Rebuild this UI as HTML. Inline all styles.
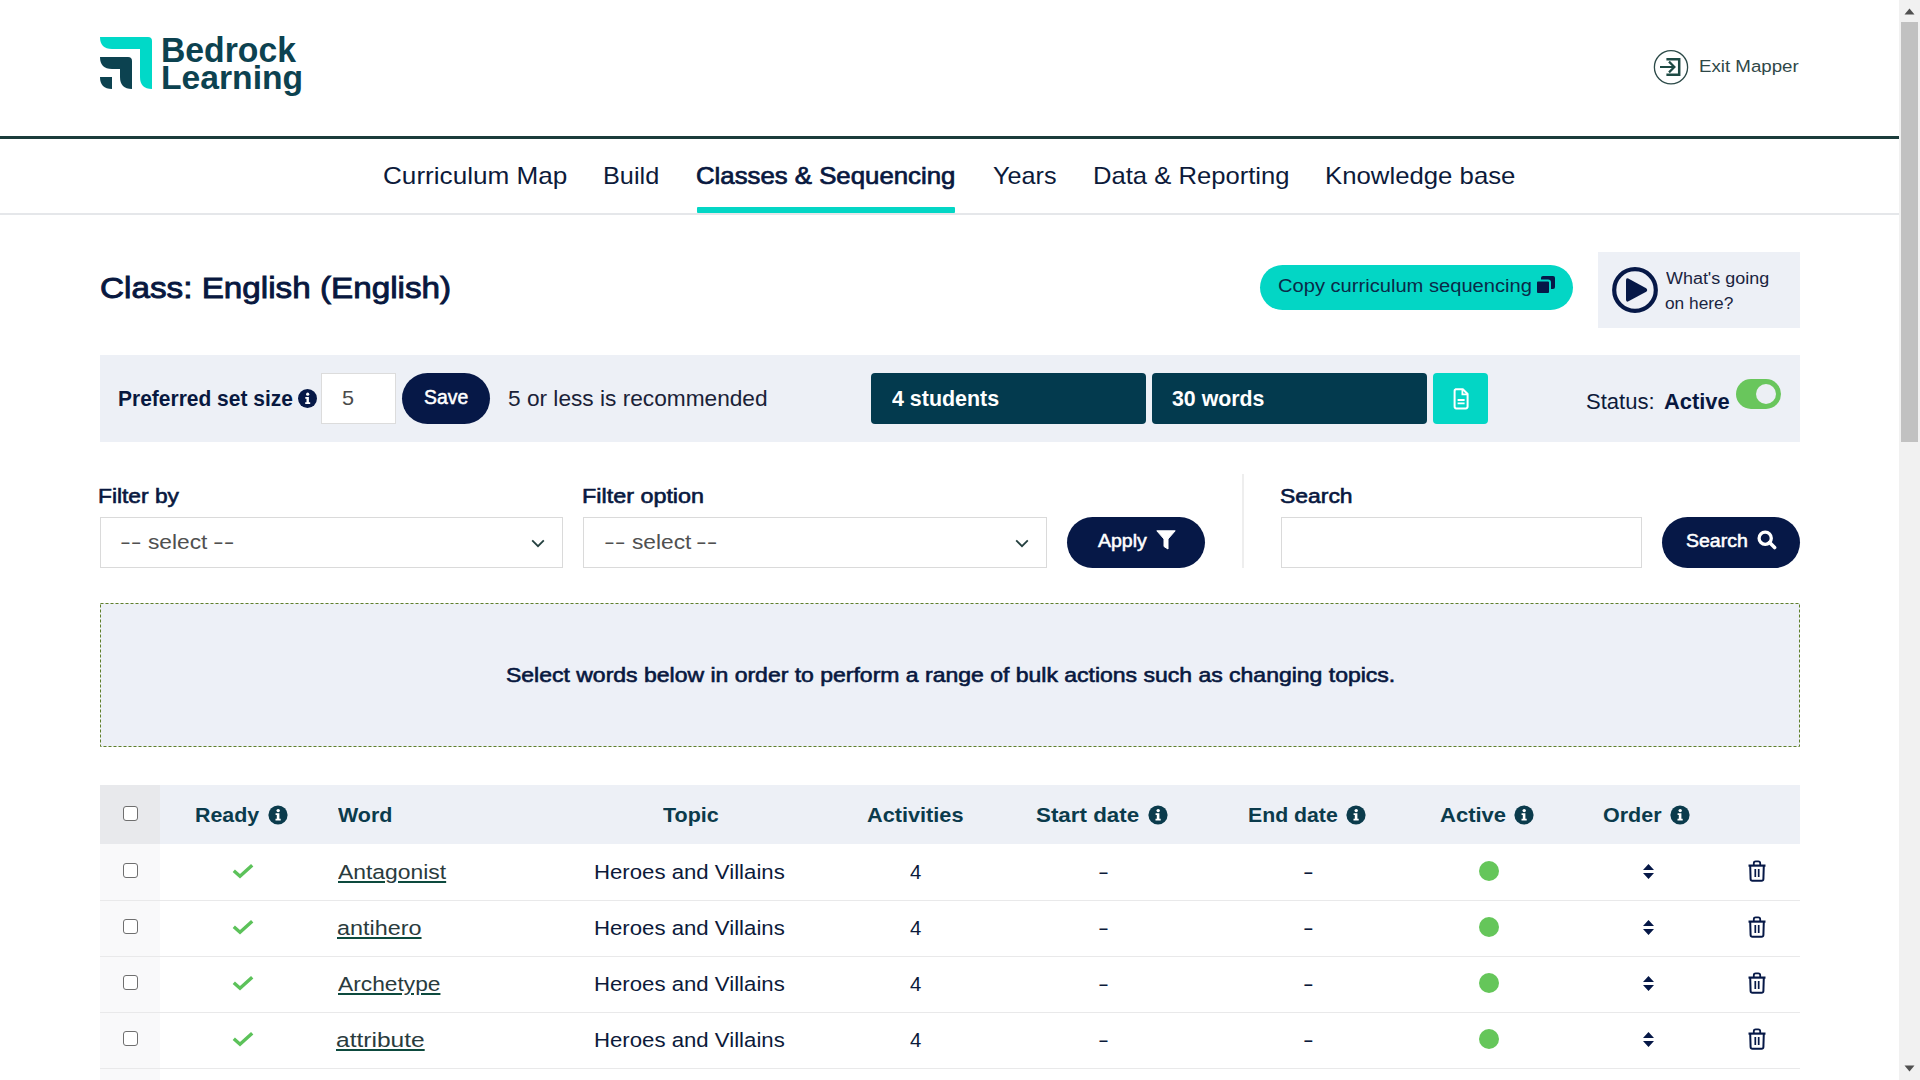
<!DOCTYPE html>
<html><head><meta charset="utf-8"><title>Bedrock Learning</title>
<style>
html,body{margin:0;padding:0;background:#fff;width:1920px;height:1080px;overflow:hidden;position:relative}
.b{position:absolute;display:block}
.t{position:absolute;white-space:pre;font-family:"Liberation Sans",sans-serif;transform-origin:0 0}
</style></head><body>
<div class=b style="left:1899px;top:0px;width:21px;height:1080px;background:#f1f1f1"></div>
<div class=b style="left:1901px;top:22px;width:17px;height:420px;background:#c1c1c1"></div>
<svg class=b style="left:1904px;top:8px" width="11" height="7" viewBox="0 0 11 7"><path d="M0.5 6.5 L5.5 0.5 L10.5 6.5 Z" fill="#505050"/></svg>
<svg class=b style="left:1904px;top:1065px" width="11" height="7" viewBox="0 0 11 7"><path d="M0.5 0.5 L5.5 6.5 L10.5 0.5 Z" fill="#505050"/></svg>
<svg class=b style="left:100px;top:37px" width="52" height="52" viewBox="0 0 52 52">
<path d="M0 0 H48 Q52 0 52 4 V52 Q40 52 40 40 V12 H12 Q0 12 0 0 Z" fill="#00d9c8"/>
<path d="M0 20 H28 Q32 20 32 24 V52 Q20 52 20 40 V32 H12 Q0 32 0 20 Z" fill="#0c4250"/>
<path d="M0 40 H12 V52 Q0 52 0 40 Z" fill="#0c4250"/>
</svg>
<svg class=b style="left:1653px;top:49px" width="36" height="36" viewBox="0 0 36 36">
<circle cx="18" cy="18.2" r="16.6" fill="none" stroke="#2c4a48" stroke-width="1.3"/>
<path d="M13.4 10.3 H26.2 V25.7 H13.4" fill="none" stroke="#1e4a44" stroke-width="2.5"/>
<path d="M7 18 H20.5" stroke="#1e4a44" stroke-width="2"/>
<path d="M16 12.6 L21.4 18 L16 23.4" fill="none" stroke="#1e4a44" stroke-width="2.2"/>
</svg>
<div class=b style="left:0px;top:136px;width:1899px;height:3px;background:#1b3c3b"></div>
<div class=b style="left:0px;top:213px;width:1899px;height:2px;background:#e5e7ea"></div>
<div class=b style="left:697px;top:207px;width:258px;height:6px;background:#03d6c5;border-radius:1px"></div>
<div class=b style="left:1260px;top:265px;width:313px;height:45px;background:#03d6c5;border-radius:23px"></div>
<svg class=b style="left:1536px;top:276px" width="19" height="18" viewBox="0 0 19 18">
<rect x="5" y="0" width="14" height="13" rx="2" fill="#061847"/>
<rect x="0" y="4.5" width="14" height="13.5" rx="2" fill="#061847" stroke="#03d6c5" stroke-width="2"/>
</svg>
<div class=b style="left:1598px;top:252px;width:202px;height:76px;background:#edf0f6"></div>
<svg class=b style="left:1611px;top:266px" width="48" height="48" viewBox="0 0 48 48">
<circle cx="24" cy="24" r="20.8" fill="none" stroke="#061847" stroke-width="4.2"/>
<path d="M17.3 12.6 Q15 11.4 15 14.4 V33.6 Q15 36.6 17.5 35.3 L35.2 25.8 Q37.2 24 35.2 22.2 Z" fill="#061847"/>
</svg>
<div class=b style="left:100px;top:355px;width:1700px;height:87px;background:#edf0f6"></div>
<svg class=b style="left:298px;top:389px" width="19" height="19" viewBox="0 0 19 19"><circle cx="9.5" cy="9.5" r="9.5" fill="#061847"/><circle cx="9.7" cy="5.2" r="1.6" fill="#fff"/><path d="M7.3 8 H10.9 V13.2 H12.2 V15 H7.2 V13.2 H8.5 V9.8 H7.3 Z" fill="#fff"/></svg>
<div class=b style="left:321px;top:373px;width:75px;height:51px;background:#fff;border:1px solid #dcdcdc;box-sizing:border-box"></div>
<div class=b style="left:402px;top:373px;width:88px;height:51px;background:#061847;border-radius:26px"></div>
<div class=b style="left:871px;top:373px;width:275px;height:51px;background:#033a4e;border-radius:4px"></div>
<div class=b style="left:1152px;top:373px;width:275px;height:51px;background:#033a4e;border-radius:4px"></div>
<div class=b style="left:1433px;top:373px;width:55px;height:51px;background:#03d6c5;border-radius:4px"></div>
<svg class=b style="left:1452px;top:387px" width="18" height="23" viewBox="0 0 18 23"><path d="M3.6 2.2 H10.8 L15.6 7 V19.6 Q15.6 21.4 13.8 21.4 H4.2 Q2.6 21.4 2.6 19.6 V4 Q2.6 2.2 4.2 2.2 Z" fill="none" stroke="#fff" stroke-width="2" stroke-linejoin="round"/><path d="M10.4 2.4 V7.4 H15.4" fill="none" stroke="#fff" stroke-width="1.8"/><path d="M5.6 13 H12.6 M5.6 16.4 H12.6" stroke="#fff" stroke-width="1.9"/></svg>
<div class=b style="left:1736px;top:379px;width:45px;height:30px;background:#69c65c;border-radius:15px"></div>
<div class=b style="left:1755.5px;top:383.5px;width:20.5px;height:20.5px;background:#eceff4;border-radius:50%"></div>
<div class=b style="left:100px;top:517px;width:463px;height:51px;background:#fff;border:1px solid #dadada;box-sizing:border-box"></div>
<div class=b style="left:583px;top:517px;width:464px;height:51px;background:#fff;border:1px solid #dadada;box-sizing:border-box"></div>
<svg class=b style="left:531px;top:539px" width="14" height="9" viewBox="0 0 14 9"><path d="M1.2 1.4 L7 7.2 L12.8 1.4" fill="none" stroke="#24403f" stroke-width="1.8"/></svg>
<svg class=b style="left:1015px;top:539px" width="14" height="9" viewBox="0 0 14 9"><path d="M1.2 1.4 L7 7.2 L12.8 1.4" fill="none" stroke="#24403f" stroke-width="1.8"/></svg>
<div class=b style="left:1067px;top:517px;width:138px;height:51px;background:#061847;border-radius:26px"></div>
<svg class=b style="left:1156px;top:530px" width="20" height="20" viewBox="0 0 20 20"><path d="M0.8 0.8 H19.2 L12 9 V19 L8 16.5 V9 Z" fill="#fff" stroke="#fff" stroke-width="1" stroke-linejoin="round"/></svg>
<div class=b style="left:1242px;top:474px;width:2px;height:94px;background:#eeeeee"></div>
<div class=b style="left:1281px;top:517px;width:361px;height:51px;background:#fff;border:1px solid #dadada;box-sizing:border-box"></div>
<div class=b style="left:1662px;top:517px;width:138px;height:51px;background:#061847;border-radius:26px"></div>
<svg class=b style="left:1757px;top:530px" width="20" height="20" viewBox="0 0 20 20"><circle cx="8.2" cy="8.2" r="6.1" fill="none" stroke="#fff" stroke-width="3.3"/><path d="M12.6 12.6 L17.6 17.6" stroke="#fff" stroke-width="3.6" stroke-linecap="round"/></svg>
<div class=b style="left:100px;top:603px;width:1700px;height:144px;background:#edf0f7"></div>
<svg class=b style="left:100px;top:603px" width="1700" height="144" viewBox="0 0 1700 144"><rect x="0.5" y="0.5" width="1699" height="143" fill="none" stroke="#5f7f2a" stroke-width="1" stroke-dasharray="3 2"/></svg>
<div class=b style="left:100px;top:785px;width:1700px;height:59px;background:#edf0f6"></div>
<div class=b style="left:100px;top:785px;width:60px;height:59px;background:#e8e9ec"></div>
<div class=b style="left:123px;top:806px;width:15px;height:15px;background:#fff;border:1.3px solid #6f6f6f;border-radius:3px;box-sizing:border-box"></div>
<svg class=b style="left:267.8px;top:804.5px" width="20" height="20" viewBox="0 0 20 20"><circle cx="10" cy="10" r="9.6" fill="#0b3b4c"/><circle cx="10.2" cy="5.6" r="1.7" fill="#fff"/><path d="M7.6 8.3 H11.4 V13.8 H12.7 V15.6 H7.5 V13.8 H8.8 V10.1 H7.6 Z" fill="#fff"/></svg>
<svg class=b style="left:1147.5px;top:804.5px" width="20" height="20" viewBox="0 0 20 20"><circle cx="10" cy="10" r="9.6" fill="#0b3b4c"/><circle cx="10.2" cy="5.6" r="1.7" fill="#fff"/><path d="M7.6 8.3 H11.4 V13.8 H12.7 V15.6 H7.5 V13.8 H8.8 V10.1 H7.6 Z" fill="#fff"/></svg>
<svg class=b style="left:1346px;top:804.5px" width="20" height="20" viewBox="0 0 20 20"><circle cx="10" cy="10" r="9.6" fill="#0b3b4c"/><circle cx="10.2" cy="5.6" r="1.7" fill="#fff"/><path d="M7.6 8.3 H11.4 V13.8 H12.7 V15.6 H7.5 V13.8 H8.8 V10.1 H7.6 Z" fill="#fff"/></svg>
<svg class=b style="left:1514px;top:804.5px" width="20" height="20" viewBox="0 0 20 20"><circle cx="10" cy="10" r="9.6" fill="#0b3b4c"/><circle cx="10.2" cy="5.6" r="1.7" fill="#fff"/><path d="M7.6 8.3 H11.4 V13.8 H12.7 V15.6 H7.5 V13.8 H8.8 V10.1 H7.6 Z" fill="#fff"/></svg>
<svg class=b style="left:1670px;top:804.5px" width="20" height="20" viewBox="0 0 20 20"><circle cx="10" cy="10" r="9.6" fill="#0b3b4c"/><circle cx="10.2" cy="5.6" r="1.7" fill="#fff"/><path d="M7.6 8.3 H11.4 V13.8 H12.7 V15.6 H7.5 V13.8 H8.8 V10.1 H7.6 Z" fill="#fff"/></svg>
<div class=b style="left:100px;top:844px;width:60px;height:56px;background:#f9f9fa"></div>
<div class=b style="left:100px;top:900px;width:60px;height:56px;background:#f9f9fa"></div>
<div class=b style="left:100px;top:956px;width:60px;height:56px;background:#f9f9fa"></div>
<div class=b style="left:100px;top:1012px;width:60px;height:56px;background:#f9f9fa"></div>
<div class=b style="left:100px;top:1068px;width:60px;height:56px;background:#f9f9fa"></div>
<div class=b style="left:100px;top:900px;width:1700px;height:1px;background:#e9e9ea"></div>
<div class=b style="left:123px;top:863px;width:15px;height:15px;background:#fff;border:1.3px solid #6f6f6f;border-radius:3px;box-sizing:border-box"></div>
<svg class=b style="left:231px;top:863px" width="24" height="17" viewBox="0 0 24 17"><path d="M2.8 7.8 L9 13.3 L21.2 2.2" fill="none" stroke="#5cc25a" stroke-width="3.4"/></svg>
<div class=b style="left:1479px;top:861px;width:20px;height:20px;background:#65c65a;border-radius:50%"></div>
<svg class=b style="left:1642px;top:864px" width="13" height="15" viewBox="0 0 13 15"><path d="M1 6 L6.5 0 L12 6 Z M1 9 L6.5 15 L12 9 Z" fill="#061847"/></svg>
<svg class=b style="left:1747px;top:860px" width="20" height="22" viewBox="0 0 20 22"><path d="M1.5 5.6 H18.5" stroke="#061847" stroke-width="2.2"/><path d="M6.8 5 V3.2 Q6.8 1.3 8.8 1.3 H11.2 Q13.2 1.3 13.2 3.2 V5" fill="none" stroke="#061847" stroke-width="1.8"/><path d="M3.2 5.6 L3.6 19 Q3.7 20.8 5.5 20.8 H14.5 Q16.3 20.8 16.4 19 L16.8 5.6" fill="none" stroke="#061847" stroke-width="2"/><path d="M8.3 9 V17 M11.7 9 V17" stroke="#061847" stroke-width="1.7"/></svg>
<div class=b style="left:100px;top:956px;width:1700px;height:1px;background:#e9e9ea"></div>
<div class=b style="left:123px;top:919px;width:15px;height:15px;background:#fff;border:1.3px solid #6f6f6f;border-radius:3px;box-sizing:border-box"></div>
<svg class=b style="left:231px;top:919px" width="24" height="17" viewBox="0 0 24 17"><path d="M2.8 7.8 L9 13.3 L21.2 2.2" fill="none" stroke="#5cc25a" stroke-width="3.4"/></svg>
<div class=b style="left:1479px;top:917px;width:20px;height:20px;background:#65c65a;border-radius:50%"></div>
<svg class=b style="left:1642px;top:920px" width="13" height="15" viewBox="0 0 13 15"><path d="M1 6 L6.5 0 L12 6 Z M1 9 L6.5 15 L12 9 Z" fill="#061847"/></svg>
<svg class=b style="left:1747px;top:916px" width="20" height="22" viewBox="0 0 20 22"><path d="M1.5 5.6 H18.5" stroke="#061847" stroke-width="2.2"/><path d="M6.8 5 V3.2 Q6.8 1.3 8.8 1.3 H11.2 Q13.2 1.3 13.2 3.2 V5" fill="none" stroke="#061847" stroke-width="1.8"/><path d="M3.2 5.6 L3.6 19 Q3.7 20.8 5.5 20.8 H14.5 Q16.3 20.8 16.4 19 L16.8 5.6" fill="none" stroke="#061847" stroke-width="2"/><path d="M8.3 9 V17 M11.7 9 V17" stroke="#061847" stroke-width="1.7"/></svg>
<div class=b style="left:100px;top:1012px;width:1700px;height:1px;background:#e9e9ea"></div>
<div class=b style="left:123px;top:975px;width:15px;height:15px;background:#fff;border:1.3px solid #6f6f6f;border-radius:3px;box-sizing:border-box"></div>
<svg class=b style="left:231px;top:975px" width="24" height="17" viewBox="0 0 24 17"><path d="M2.8 7.8 L9 13.3 L21.2 2.2" fill="none" stroke="#5cc25a" stroke-width="3.4"/></svg>
<div class=b style="left:1479px;top:973px;width:20px;height:20px;background:#65c65a;border-radius:50%"></div>
<svg class=b style="left:1642px;top:976px" width="13" height="15" viewBox="0 0 13 15"><path d="M1 6 L6.5 0 L12 6 Z M1 9 L6.5 15 L12 9 Z" fill="#061847"/></svg>
<svg class=b style="left:1747px;top:972px" width="20" height="22" viewBox="0 0 20 22"><path d="M1.5 5.6 H18.5" stroke="#061847" stroke-width="2.2"/><path d="M6.8 5 V3.2 Q6.8 1.3 8.8 1.3 H11.2 Q13.2 1.3 13.2 3.2 V5" fill="none" stroke="#061847" stroke-width="1.8"/><path d="M3.2 5.6 L3.6 19 Q3.7 20.8 5.5 20.8 H14.5 Q16.3 20.8 16.4 19 L16.8 5.6" fill="none" stroke="#061847" stroke-width="2"/><path d="M8.3 9 V17 M11.7 9 V17" stroke="#061847" stroke-width="1.7"/></svg>
<div class=b style="left:100px;top:1068px;width:1700px;height:1px;background:#e9e9ea"></div>
<div class=b style="left:123px;top:1031px;width:15px;height:15px;background:#fff;border:1.3px solid #6f6f6f;border-radius:3px;box-sizing:border-box"></div>
<svg class=b style="left:231px;top:1031px" width="24" height="17" viewBox="0 0 24 17"><path d="M2.8 7.8 L9 13.3 L21.2 2.2" fill="none" stroke="#5cc25a" stroke-width="3.4"/></svg>
<div class=b style="left:1479px;top:1029px;width:20px;height:20px;background:#65c65a;border-radius:50%"></div>
<svg class=b style="left:1642px;top:1032px" width="13" height="15" viewBox="0 0 13 15"><path d="M1 6 L6.5 0 L12 6 Z M1 9 L6.5 15 L12 9 Z" fill="#061847"/></svg>
<svg class=b style="left:1747px;top:1028px" width="20" height="22" viewBox="0 0 20 22"><path d="M1.5 5.6 H18.5" stroke="#061847" stroke-width="2.2"/><path d="M6.8 5 V3.2 Q6.8 1.3 8.8 1.3 H11.2 Q13.2 1.3 13.2 3.2 V5" fill="none" stroke="#061847" stroke-width="1.8"/><path d="M3.2 5.6 L3.6 19 Q3.7 20.8 5.5 20.8 H14.5 Q16.3 20.8 16.4 19 L16.8 5.6" fill="none" stroke="#061847" stroke-width="2"/><path d="M8.3 9 V17 M11.7 9 V17" stroke="#061847" stroke-width="1.7"/></svg>
<div class=t style="left:160.73px;top:32.50px;font-size:34.3px;line-height:34.3px;font-weight:700;color:#0c4250;transform:scaleX(0.9830);">Bedrock</div>
<div class=t style="left:160.72px;top:59.90px;font-size:34.0px;line-height:34.0px;font-weight:700;color:#0c4250;transform:scaleX(0.9899);">Learning</div>
<div class=t style="left:1698.62px;top:58.20px;font-size:17.4px;line-height:17.4px;font-weight:400;color:#2f4848;transform:scaleX(1.0750);">Exit Mapper</div>
<div class=t style="left:382.65px;top:163.90px;font-size:23.8px;line-height:23.8px;font-weight:400;color:#0c1a3a;transform:scaleX(1.0979);">Curriculum Map</div>
<div class=t style="left:603.08px;top:163.90px;font-size:23.8px;line-height:23.8px;font-weight:400;color:#0c1a3a;transform:scaleX(1.0620);">Build</div>
<div class=t style="left:696.32px;top:163.90px;font-size:23.8px;line-height:23.8px;font-weight:400;color:#08183f;transform:scaleX(1.0831);-webkit-text-stroke:0.71px #08183f;">Classes &amp; Sequencing</div>
<div class=t style="left:992.84px;top:163.90px;font-size:23.8px;line-height:23.8px;font-weight:400;color:#0c1a3a;transform:scaleX(1.0586);">Years</div>
<div class=t style="left:1092.85px;top:163.90px;font-size:23.8px;line-height:23.8px;font-weight:400;color:#0c1a3a;transform:scaleX(1.0765);">Data &amp; Reporting</div>
<div class=t style="left:1325.34px;top:163.90px;font-size:23.8px;line-height:23.8px;font-weight:400;color:#0c1a3a;transform:scaleX(1.0821);">Knowledge base</div>
<div class=t style="left:99.77px;top:272.60px;font-size:29.4px;line-height:29.4px;font-weight:400;color:#08183f;transform:scaleX(1.1315);-webkit-text-stroke:0.88px #08183f;">Class: English (English)</div>
<div class=t style="left:1278.08px;top:277.20px;font-size:18.0px;line-height:18.0px;font-weight:400;color:#0a2a48;transform:scaleX(1.1178);">Copy curriculum sequencing</div>
<div class=t style="left:1666.20px;top:271.00px;font-size:16.0px;line-height:16.0px;font-weight:400;color:#1a2440;transform:scaleX(1.1209);">What&#x27;s going</div>
<div class=t style="left:1665.12px;top:295.60px;font-size:16.0px;line-height:16.0px;font-weight:400;color:#1a2440;transform:scaleX(1.0806);">on here?</div>
<div class=t style="left:118.32px;top:389.30px;font-size:21.4px;line-height:21.4px;font-weight:700;color:#08183f;transform:scaleX(0.9808);">Preferred set size</div>
<div class=t style="left:341.96px;top:388.30px;font-size:20.8px;line-height:20.8px;font-weight:400;color:#4a4a4a;transform:scaleX(1.0400);">5</div>
<div class=t style="left:424.20px;top:388.40px;font-size:19.3px;line-height:19.3px;font-weight:400;color:#ffffff;transform:scaleX(1.0048);-webkit-text-stroke:0.5px #fff;">Save</div>
<div class=t style="left:507.85px;top:389.20px;font-size:21.5px;line-height:21.5px;font-weight:400;color:#1a2238;transform:scaleX(1.0545);">5 or less is recommended</div>
<div class=t style="left:891.90px;top:388.90px;font-size:21.4px;line-height:21.4px;font-weight:700;color:#ffffff;transform:scaleX(1.0019);">4 students</div>
<div class=t style="left:1171.80px;top:388.90px;font-size:21.4px;line-height:21.4px;font-weight:700;color:#ffffff;transform:scaleX(0.9967);">30 words</div>
<div class=t style="left:1585.57px;top:392.20px;font-size:21.4px;line-height:21.4px;font-weight:400;color:#0c1a3a;transform:scaleX(1.0312);">Status:</div>
<div class=t style="left:1663.78px;top:392.20px;font-size:21.4px;line-height:21.4px;font-weight:700;color:#08183f;transform:scaleX(1.0222);">Active</div>
<div class=t style="left:98.28px;top:486.20px;font-size:20.5px;line-height:20.5px;font-weight:400;color:#08183f;transform:scaleX(1.1113);-webkit-text-stroke:0.61px #08183f;">Filter by</div>
<div class=t style="left:582.12px;top:486.20px;font-size:20.5px;line-height:20.5px;font-weight:400;color:#08183f;transform:scaleX(1.1394);-webkit-text-stroke:0.61px #08183f;">Filter option</div>
<div class=t style="left:1279.88px;top:486.10px;font-size:20.5px;line-height:20.5px;font-weight:400;color:#08183f;transform:scaleX(1.1175);-webkit-text-stroke:0.61px #08183f;">Search</div>
<div class=t style="left:120.08px;top:531.60px;font-size:20.0px;line-height:20.0px;font-weight:400;color:#505050;transform:scaleX(1.6250);">--</div>
<div class=t style="left:147.86px;top:531.60px;font-size:20.0px;line-height:20.0px;font-weight:400;color:#505050;transform:scaleX(1.1373);">select</div>
<div class=t style="left:212.50px;top:531.60px;font-size:20.0px;line-height:20.0px;font-weight:400;color:#505050;transform:scaleX(1.6000);">--</div>
<div class=t style="left:603.88px;top:531.60px;font-size:20.0px;line-height:20.0px;font-weight:400;color:#505050;transform:scaleX(1.6250);">--</div>
<div class=t style="left:631.66px;top:531.60px;font-size:20.0px;line-height:20.0px;font-weight:400;color:#505050;transform:scaleX(1.1373);">select</div>
<div class=t style="left:696.30px;top:531.60px;font-size:20.0px;line-height:20.0px;font-weight:400;color:#505050;transform:scaleX(1.6000);">--</div>
<div class=t style="left:1098.10px;top:533.00px;font-size:17.6px;line-height:17.6px;font-weight:400;color:#ffffff;transform:scaleX(1.1091);-webkit-text-stroke:0.5px #fff;">Apply</div>
<div class=t style="left:1686.09px;top:532.90px;font-size:17.6px;line-height:17.6px;font-weight:400;color:#ffffff;transform:scaleX(1.1093);-webkit-text-stroke:0.5px #fff;">Search</div>
<div class=t style="left:505.54px;top:665.60px;font-size:19.8px;line-height:19.8px;font-weight:400;color:#08183f;transform:scaleX(1.1619);-webkit-text-stroke:0.59px #08183f;">Select words below in order to perform a range of bulk actions such as changing topics.</div>
<div class=t style="left:194.76px;top:804.90px;font-size:20.5px;line-height:20.5px;font-weight:700;color:#0b3b4c;transform:scaleX(1.0426);">Ready</div>
<div class=t style="left:338.30px;top:804.90px;font-size:20.5px;line-height:20.5px;font-weight:700;color:#0b3b4c;transform:scaleX(1.0471);">Word</div>
<div class=t style="left:662.70px;top:804.90px;font-size:20.5px;line-height:20.5px;font-weight:700;color:#0b3b4c;transform:scaleX(1.0491);">Topic</div>
<div class=t style="left:867.04px;top:804.90px;font-size:20.5px;line-height:20.5px;font-weight:700;color:#0b3b4c;transform:scaleX(1.0589);">Activities</div>
<div class=t style="left:1036.41px;top:804.90px;font-size:20.5px;line-height:20.5px;font-weight:700;color:#0b3b4c;transform:scaleX(1.0914);">Start date</div>
<div class=t style="left:1247.71px;top:804.90px;font-size:20.5px;line-height:20.5px;font-weight:700;color:#0b3b4c;transform:scaleX(1.0371);">End date</div>
<div class=t style="left:1440.13px;top:804.90px;font-size:20.5px;line-height:20.5px;font-weight:700;color:#0b3b4c;transform:scaleX(1.0733);">Active</div>
<div class=t style="left:1602.65px;top:804.90px;font-size:20.5px;line-height:20.5px;font-weight:700;color:#0b3b4c;transform:scaleX(1.0491);">Order</div>
<div class=t style="left:337.70px;top:861.80px;font-size:20.5px;line-height:20.5px;font-weight:400;color:#2a3b3d;transform:scaleX(1.1165);text-decoration:underline;text-decoration-color:#0d4a3e;text-decoration-thickness:1.6px;text-underline-offset:1.5px;">Antagonist</div>
<div class=t style="left:594.14px;top:861.80px;font-size:20.5px;line-height:20.5px;font-weight:400;color:#0c1a3a;transform:scaleX(1.0822);">Heroes and Villains</div>
<div class=t style="left:910.40px;top:861.80px;font-size:20.5px;line-height:20.5px;font-weight:400;color:#0c1a3a;transform:scaleX(0.9909);">4</div>
<div class=t style="left:1098.40px;top:861.80px;font-size:20.5px;line-height:20.5px;font-weight:400;color:#0c1a3a;transform:scaleX(1.6000);">-</div>
<div class=t style="left:1303.14px;top:861.80px;font-size:20.5px;line-height:20.5px;font-weight:400;color:#0c1a3a;transform:scaleX(1.5600);">-</div>
<div class=t style="left:336.56px;top:917.80px;font-size:20.5px;line-height:20.5px;font-weight:400;color:#2a3b3d;transform:scaleX(1.1411);text-decoration:underline;text-decoration-color:#0d4a3e;text-decoration-thickness:1.6px;text-underline-offset:1.5px;">antihero</div>
<div class=t style="left:594.14px;top:917.80px;font-size:20.5px;line-height:20.5px;font-weight:400;color:#0c1a3a;transform:scaleX(1.0822);">Heroes and Villains</div>
<div class=t style="left:910.40px;top:917.80px;font-size:20.5px;line-height:20.5px;font-weight:400;color:#0c1a3a;transform:scaleX(0.9909);">4</div>
<div class=t style="left:1098.40px;top:917.80px;font-size:20.5px;line-height:20.5px;font-weight:400;color:#0c1a3a;transform:scaleX(1.6000);">-</div>
<div class=t style="left:1303.14px;top:917.80px;font-size:20.5px;line-height:20.5px;font-weight:400;color:#0c1a3a;transform:scaleX(1.5600);">-</div>
<div class=t style="left:337.70px;top:973.80px;font-size:20.5px;line-height:20.5px;font-weight:400;color:#2a3b3d;transform:scaleX(1.1098);text-decoration:underline;text-decoration-color:#0d4a3e;text-decoration-thickness:1.6px;text-underline-offset:1.5px;">Archetype</div>
<div class=t style="left:594.14px;top:973.80px;font-size:20.5px;line-height:20.5px;font-weight:400;color:#0c1a3a;transform:scaleX(1.0822);">Heroes and Villains</div>
<div class=t style="left:910.40px;top:973.80px;font-size:20.5px;line-height:20.5px;font-weight:400;color:#0c1a3a;transform:scaleX(0.9909);">4</div>
<div class=t style="left:1098.40px;top:973.80px;font-size:20.5px;line-height:20.5px;font-weight:400;color:#0c1a3a;transform:scaleX(1.6000);">-</div>
<div class=t style="left:1303.14px;top:973.80px;font-size:20.5px;line-height:20.5px;font-weight:400;color:#0c1a3a;transform:scaleX(1.5600);">-</div>
<div class=t style="left:336.10px;top:1029.80px;font-size:20.5px;line-height:20.5px;font-weight:400;color:#2a3b3d;transform:scaleX(1.1972);text-decoration:underline;text-decoration-color:#0d4a3e;text-decoration-thickness:1.6px;text-underline-offset:1.5px;">attribute</div>
<div class=t style="left:594.14px;top:1029.80px;font-size:20.5px;line-height:20.5px;font-weight:400;color:#0c1a3a;transform:scaleX(1.0822);">Heroes and Villains</div>
<div class=t style="left:910.40px;top:1029.80px;font-size:20.5px;line-height:20.5px;font-weight:400;color:#0c1a3a;transform:scaleX(0.9909);">4</div>
<div class=t style="left:1098.40px;top:1029.80px;font-size:20.5px;line-height:20.5px;font-weight:400;color:#0c1a3a;transform:scaleX(1.6000);">-</div>
<div class=t style="left:1303.14px;top:1029.80px;font-size:20.5px;line-height:20.5px;font-weight:400;color:#0c1a3a;transform:scaleX(1.5600);">-</div>
</body></html>
